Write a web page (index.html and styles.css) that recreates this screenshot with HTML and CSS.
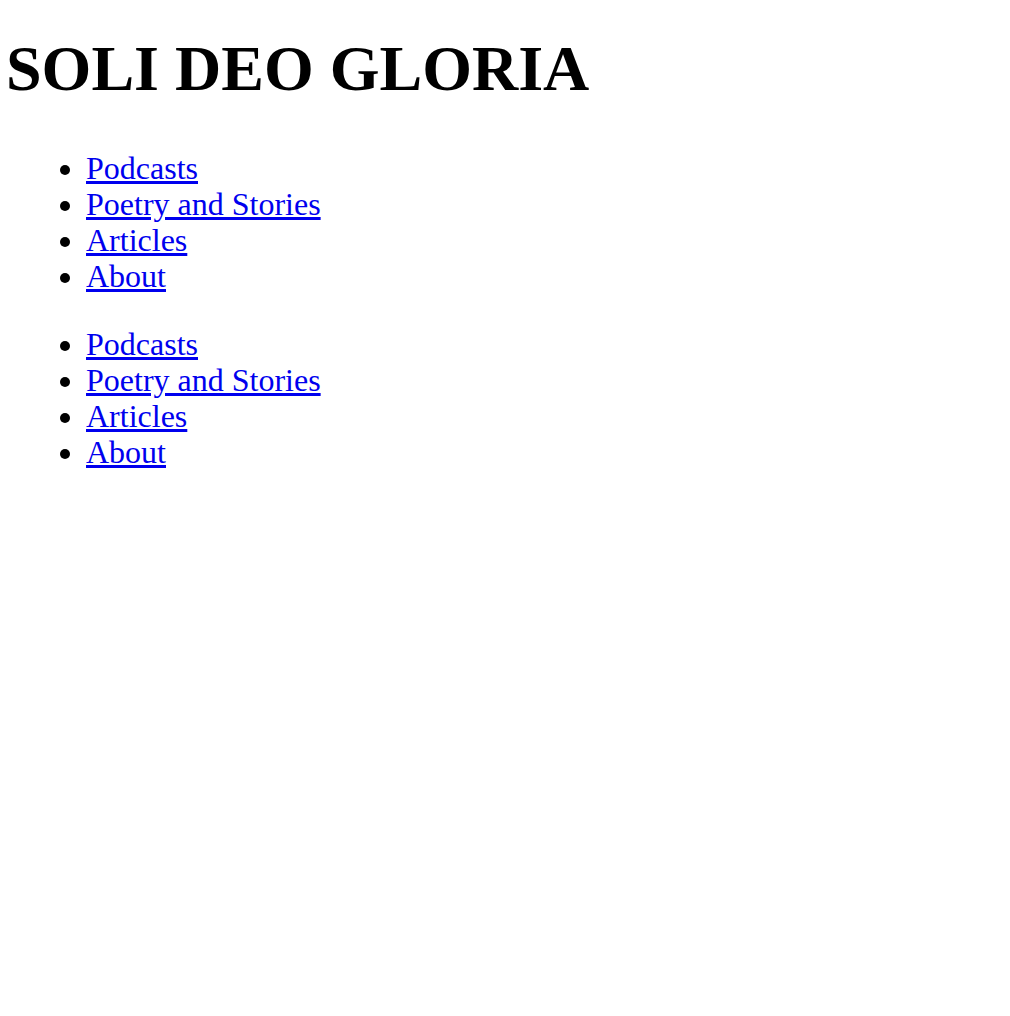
FILE: index.html
```html
<!DOCTYPE html>
<html>
<head>
<meta charset="utf-8">
<title>Soli Deo Gloria</title>
<link rel="stylesheet" href="styles.css">
</head>
<body>
<header class="site-header">
  <h1 class="site-title">SOLI DEO GLORIA</h1>
  <nav>
    <ul class="nav-list">
      <li><a href="#">Podcasts</a></li>
      <li><a href="#">Poetry and Stories</a></li>
      <li><a href="#">Articles</a></li>
      <li><a href="#">About</a></li>
    </ul>
  </nav>
  <nav>
    <ul class="nav-list">
      <li><a href="#">Podcasts</a></li>
      <li><a href="#">Poetry and Stories</a></li>
      <li><a href="#">Articles</a></li>
      <li><a href="#">About</a></li>
    </ul>
  </nav>
</header>
</body>
</html>
```
FILE: styles.css
```css
html, body {
  background: #fff;
}
body {
  margin: 0;
  padding: 0 6px;
  font-family: "Liberation Serif", "Times New Roman", serif;
  font-size: 32px;
  line-height: 36px;
  color: #000;
}
.site-title {
  font-size: 64px;
  line-height: 74px;
  font-weight: bold;
  margin: 32px 0 44px;
}
.nav-list {
  margin: 32px 0;
  padding-left: 80px;
}
.nav-list a {
  color: #0000ee;
  text-decoration: underline;
}
```
